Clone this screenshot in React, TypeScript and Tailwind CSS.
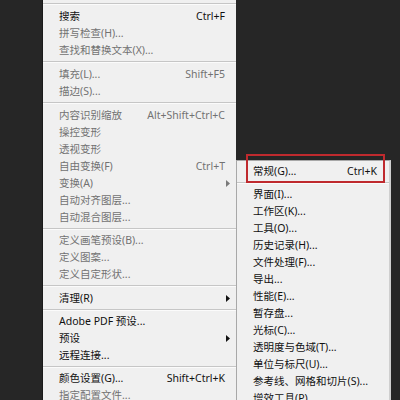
import React from "react";

type Item =
  | { t: "sep"; h: number }
  | { t: "item"; label: string; sc?: string; dis?: boolean; arrow?: boolean };

const mainItems: Item[] = [
  { t: "sep", h: 8 },
  { t: "item", label: "搜索", sc: "Ctrl+F" },
  { t: "item", label: "拼写检查(H)...", dis: true },
  { t: "item", label: "查找和替换文本(X)...", dis: true },
  { t: "sep", h: 7 },
  { t: "item", label: "填充(L)...", sc: "Shift+F5", dis: true },
  { t: "item", label: "描边(S)...", dis: true },
  { t: "sep", h: 7 },
  { t: "item", label: "内容识别缩放", sc: "Alt+Shift+Ctrl+C", dis: true },
  { t: "item", label: "操控变形", dis: true },
  { t: "item", label: "透视变形", dis: true },
  { t: "item", label: "自由变换(F)", sc: "Ctrl+T", dis: true },
  { t: "item", label: "变换(A)", dis: true, arrow: true },
  { t: "item", label: "自动对齐图层...", dis: true },
  { t: "item", label: "自动混合图层...", dis: true },
  { t: "sep", h: 6 },
  { t: "item", label: "定义画笔预设(B)...", dis: true },
  { t: "item", label: "定义图案...", dis: true },
  { t: "item", label: "定义自定形状...", dis: true },
  { t: "sep", h: 7 },
  { t: "item", label: "清理(R)", arrow: true },
  { t: "sep", h: 6 },
  { t: "item", label: "Adobe PDF 预设..." },
  { t: "item", label: "预设", arrow: true },
  { t: "item", label: "远程连接..." },
  { t: "sep", h: 6 },
  { t: "item", label: "颜色设置(G)...", sc: "Shift+Ctrl+K" },
  { t: "item", label: "指定配置文件...", dis: true },
];

const subItems: Item[] = [
  { t: "item", label: "常规(G)...", sc: "Ctrl+K" },
  { t: "sep", h: 6 },
  { t: "item", label: "界面(I)..." },
  { t: "item", label: "工作区(K)..." },
  { t: "item", label: "工具(O)..." },
  { t: "item", label: "历史记录(H)..." },
  { t: "item", label: "文件处理(F)..." },
  { t: "item", label: "导出..." },
  { t: "item", label: "性能(E)..." },
  { t: "item", label: "暂存盘..." },
  { t: "item", label: "光标(C)..." },
  { t: "item", label: "透明度与色域(T)..." },
  { t: "item", label: "单位与标尺(U)..." },
  { t: "item", label: "参考线、网格和切片(S)..." },
  { t: "item", label: "增效工具(P)..." },
];

function Arrow({ dis }: { dis?: boolean }) {
  return (
    <svg width="4" height="7" viewBox="0 0 4 7" className="shrink-0">
      <path d="M0 0 L4 3.5 L0 7 Z" fill={dis ? "#7a7a7a" : "#111"} />
    </svg>
  );
}

function Sep({ h }: { h: number }) {
  return (
    <div className="flex flex-col" style={{ height: h, paddingTop: Math.floor(h / 2) - 1 }}>
      <div className="h-px bg-[#c6c6c6]" />
      <div className="h-px bg-[#fbfbfb]" />
    </div>
  );
}

function Menu({ items, pl, pr }: { items: Item[]; pl: string; pr: string }) {
  return (
    <>
      {items.map((it, i) =>
        it.t === "sep" ? (
          <Sep key={i} h={it.h} />
        ) : (
          <div
            key={i}
            className={`flex h-[17px] items-center justify-between ${pl} ${it.arrow ? "pr-[6px]" : pr} ${
              it.dis ? "text-[#727272]" : "text-[#111]"
            }`}
          >
            <span className="whitespace-nowrap">{it.label}</span>
            {it.sc && <span className="whitespace-nowrap">{it.sc}</span>}
            {it.arrow && <Arrow dis={it.dis} />}
          </div>
        )
      )}
    </>
  );
}

export default function App() {
  return (
    <div
      className="relative flex h-[400px] w-[400px] overflow-hidden bg-[#262626] text-[10.5px] leading-none"
      style={{ fontFamily: '"Noto Sans", "Noto Sans CJK SC", sans-serif' }}
    >
      <div className="w-[43px] shrink-0 border-r border-[#1a1a1a]" />
      <div className="w-[193px] shrink-0 bg-[#f0f0f0]">
        <Menu items={mainItems} pl="pl-[16px]" pr="pr-[11px]" />
      </div>
      <div className="absolute left-[236px] top-[160px] w-[155px] border-l border-t border-[#a8a8a8] border-r-2 border-r-[#cfcfcf] bg-[#f0f0f0] pt-[2px] h-[260px]">
        <Menu items={subItems} pl="pl-[16px]" pr="pr-[12px]" />
      </div>
      <div className="absolute left-[246px] top-[154px] h-[29px] w-[139px] border-2 border-[#bf2a2e]" />
    </div>
  );
}
